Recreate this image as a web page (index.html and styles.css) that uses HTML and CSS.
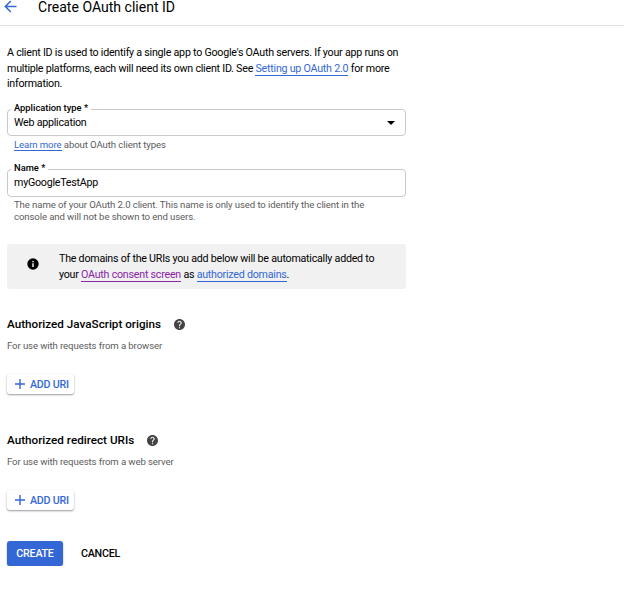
FILE: index.html
```html
<!DOCTYPE html>
<html lang="en">
<head>
<meta charset="utf-8">
<title>Create OAuth client ID</title>
<link rel="stylesheet" href="styles.css">
</head>
<body>
<header class="header">
  <svg class="back" viewBox="0 0 14 14"><path d="M13.500 7H1.500M7.400 1 1.400 7l6 6"/></svg>
  <h1 class="title">Create OAuth client ID</h1>
</header>
<main class="content">
  <p class="intro">A client ID is used to identify a single app to Google's OAuth servers. If your app runs on<br>multiple platforms, each will need its own client ID. See <a class="link">Setting up OAuth 2.0</a> for more<br>information.</p>

  <div class="field field-type">
    <span class="label">Application type *</span>
    <span class="value">Web application</span>
    <svg class="caret" viewBox="0 0 8 4"><path d="M0 0h8L4 4z"/></svg>
  </div>
  <p class="hint hint-type"><a class="link">Learn more</a> about OAuth client types</p>

  <div class="field field-name">
    <span class="label">Name *</span>
    <span class="value">myGoogleTestApp</span>
  </div>
  <p class="hint hint-name">The name of your OAuth 2.0 client. This name is only used to identify the client in the<br>console and will not be shown to end users.</p>

  <div class="notice">
    <svg class="info" viewBox="0 0 12 12"><circle cx="6" cy="6" r="5.7"/><path d="M5.300 5.200h1.400V9H5.300zM5.300 2.900h1.400v1.400H5.300z" fill="#fff"/></svg>
    <p class="notice-text">The domains of the URIs you add below will be automatically added to<br>your <a class="link visited">OAuth consent screen</a> as <a class="link">authorized domains</a>.</p>
  </div>

  <section class="section">
    <h2 class="heading"><span class="heading-text">Authorized JavaScript origins</span>
      <svg class="help" viewBox="2 2 20 20"><path d="M12 2C6.480 2 2 6.480 2 12s4.480 10 10 10 10-4.480 10-10S17.520 2 12 2zm1 17h-2v-2h2v2zm2.070-7.750l-.9.920C13.450 12.900 13 13.500 13 15h-2v-.5c0-1.100.45-2.100 1.170-2.830l1.240-1.260c.37-.36.59-.86.59-1.410 0-1.100-.9-2-2-2s-2 .9-2 2H8c0-2.210 1.790-4 4-4s4 1.790 4 4c0 .88-.36 1.680-.93 2.250z"/></svg>
    </h2>
    <p class="sub">For use with requests from a browser</p>
    <button class="add"><svg class="plus" viewBox="0 0 10 10"><path d="M5 0v10M0 5h10"/></svg><span class="add-text">ADD URI</span></button>
  </section>

  <section class="section redirect">
    <h2 class="heading"><span class="heading-text">Authorized redirect URIs</span>
      <svg class="help" viewBox="2 2 20 20"><path d="M12 2C6.480 2 2 6.480 2 12s4.480 10 10 10 10-4.480 10-10S17.520 2 12 2zm1 17h-2v-2h2v2zm2.070-7.750l-.9.920C13.450 12.900 13 13.500 13 15h-2v-.5c0-1.100.45-2.100 1.170-2.830l1.240-1.260c.37-.36.59-.86.59-1.410 0-1.100-.9-2-2-2s-2 .9-2 2H8c0-2.210 1.790-4 4-4s4 1.790 4 4c0 .88-.36 1.680-.93 2.250z"/></svg>
    </h2>
    <p class="sub">For use with requests from a web server</p>
    <button class="add"><svg class="plus" viewBox="0 0 10 10"><path d="M5 0v10M0 5h10"/></svg><span class="add-text">ADD URI</span></button>
  </section>

  <div class="actions">
    <button class="create">CREATE</button>
    <button class="cancel">CANCEL</button>
  </div>
</main>
</body>
</html>
```
FILE: styles.css
```css
* { box-sizing: border-box; }
body {
  margin: 0;
  background: #fff;
  color: #000;
  font-family: Roboto, "Liberation Sans", sans-serif;
  font-size: 10.7px;
  letter-spacing: -0.242px;
}
h1, h2, p { margin: 0; }
button { font: inherit; letter-spacing: inherit; border: 0; padding: 0; }
svg { display: block; flex: none; }

.header {
  display: flex;
  align-items: flex-start;
  height: 26px;
  padding-left: 4px;
  border-bottom: 1px solid #e2e2e2;
}
.back { width: 13px; height: 13px; fill: none; stroke: #3367d6; stroke-width: 1.6; }
.title { margin-left: 21px; font-size: 14.050px; font-weight: 400; letter-spacing: 0; line-height: 14px; white-space: nowrap; }

.content { width: 406px; padding: 19px 0 0 7px; white-space: nowrap; }
.intro { height: 47px; line-height: 15.700px; }
.link { color: #3367d6; border-bottom: 1px solid #3367d6; }
.visited { color: #8a24a8; border-color: #8a24a8; }

.field {
  position: relative;
  display: flex;
  align-items: center;
  width: 399px;
  border: 1px solid #c9c9c9;
  border-radius: 4px;
  padding: 0 10px 0 6px;
}
.field-type { height: 27px; margin-top: 17px; }
.field-name { height: 28px; margin-top: 18px; }
.label {
  position: absolute;
  top: -8px;
  left: 3px;
  padding: 0 3px;
  background: #fff;
  font-size: 9.350px;
  font-weight: 500;
  letter-spacing: 0;
  line-height: 12px;
}
.value { flex: 1; line-height: 14px; }
.caret { width: 8px; height: 4px; }
.hint { padding-left: 7px; color: #5c5c5c; font-size: 9.600px; letter-spacing: -0.1px; line-height: 12px; }
.hint-type { margin-top: 3px; }
.hint-name { margin-top: 2px; }

.notice {
  display: flex;
  align-items: center;
  height: 45px;
  margin-top: 21px;
  padding-left: 20px;
  border-radius: 3px;
  background: #f1f1f1;
}
.info { width: 12px; height: 12px; margin-bottom: 5px; }
.notice-text { margin-left: 20px; line-height: 16px; }

.section { margin-top: 27px; }
.heading { display: flex; align-items: center; height: 16px; font-size: 11.700px; font-weight: 500; letter-spacing: 0; }
.help { width: 11px; height: 11px; margin-left: 13px; fill: #444; }
.sub { margin-top: 8px; color: #5c5c5c; font-size: 9.600px; letter-spacing: -0.1px; line-height: 12px; }
.add {
  display: flex;
  align-items: center;
  width: 67px;
  height: 20px;
  margin-top: 22px;
  padding-left: 8px;
  border-radius: 3px;
  background: #fff;
  box-shadow: 0 1px 2px rgba(0, 0, 0, .4);
  color: #3367d6;
  font-weight: 500;
}
.plus { width: 10px; height: 10px; stroke: #3367d6; stroke-width: 1.4; }
.add-text { margin-left: 5px; }
.redirect { margin-top: 38px; }

.actions { display: flex; align-items: center; margin-top: 31px; }
.create {
  width: 56px;
  height: 25px;
  border-radius: 3px;
  background: #3367d6;
  box-shadow: 0 1px 2px rgba(0, 0, 0, .35);
  color: #fff;
  font-weight: 500;
}
.cancel { margin-left: 18px; background: none; color: #000; font-weight: 500; }
```
